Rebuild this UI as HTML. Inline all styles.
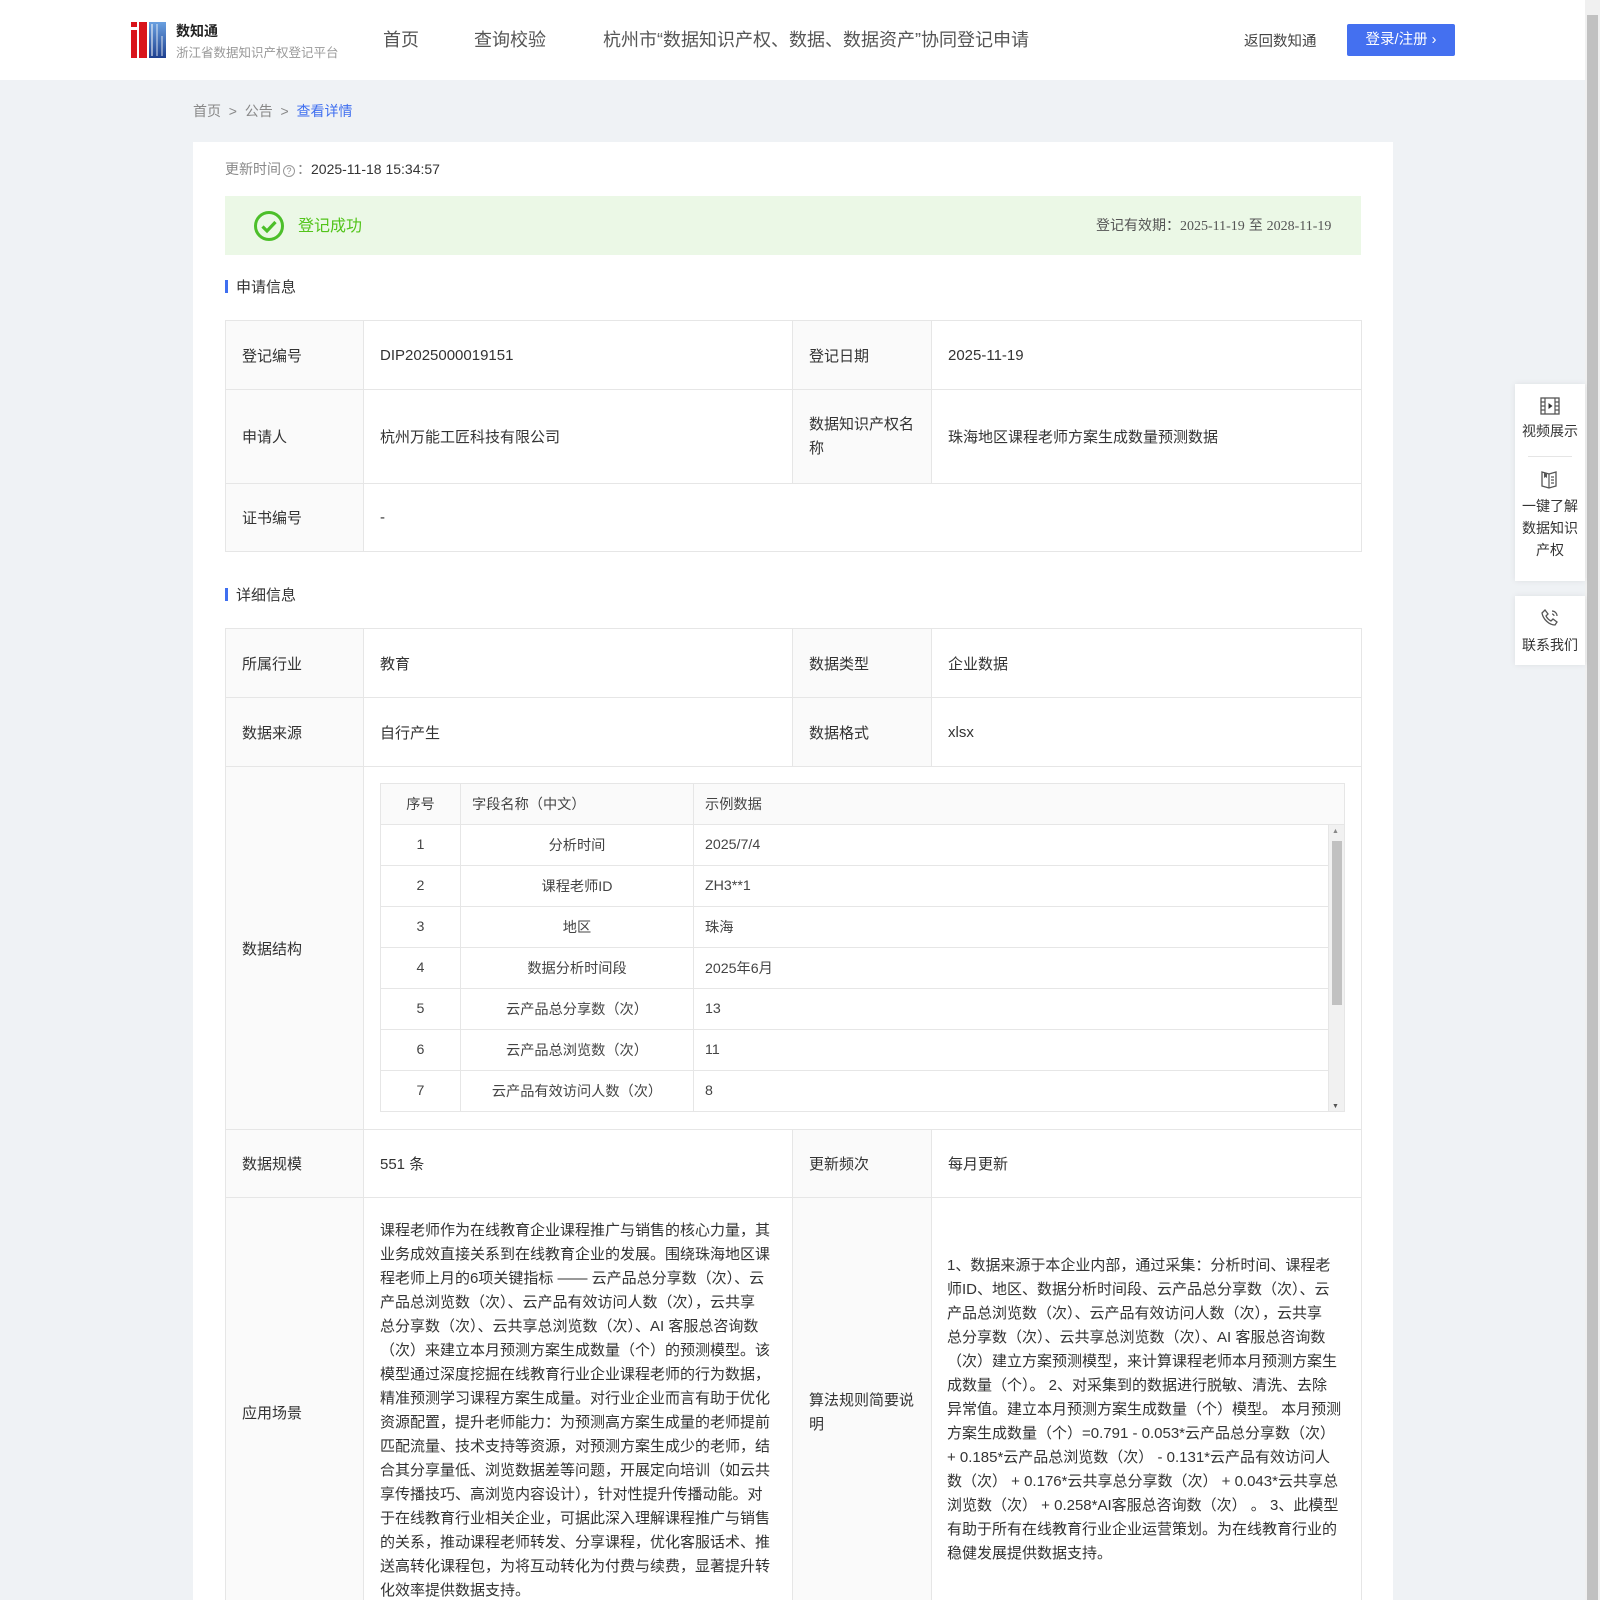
<!DOCTYPE html>
<html><head><meta charset="utf-8">
<style>
*{margin:0;padding:0;box-sizing:border-box}
html,body{width:1600px;height:1600px;overflow:hidden}
body{background:#eff2f5;font-family:"Liberation Sans","Noto Sans CJK SC",sans-serif;color:#333;font-size:14px;position:relative}
.a{position:absolute;white-space:nowrap}
.hdr{position:absolute;left:0;top:0;width:1585px;height:80px;background:#fff}
.nav{font-size:18px;color:#555;top:26px}
.card{position:absolute;left:193px;top:142px;width:1200px;height:1500px;background:#fff}
table.t{position:absolute;border-collapse:collapse;table-layout:fixed}
table.t td{border:1px solid #e6e6e6;padding:0 16px;font-size:15px;color:#333;vertical-align:middle}
table.t td.l{background:#fafafa}
.sec{font-size:15px;color:#333}
.sec:before{content:"";display:inline-block;width:3px;height:13px;background:#3f6ff0;margin-right:8px;vertical-align:-1px}
table.in{position:absolute;border-collapse:collapse;table-layout:fixed}
table.in td{border:1px solid #e6e6e6;height:41px;font-size:14.2px;color:#444;padding:0 11px}
.side{position:absolute;left:1515px;width:70px;background:#fff;box-shadow:0 0 6px rgba(0,0,0,.08);text-align:center;font-size:14px;color:#333;line-height:22px}
.ln div{height:24px;line-height:24px;white-space:nowrap;font-size:15px;color:#333}
</style></head><body>
<div class="hdr"></div>
<svg class="a" style="left:131px;top:22px" width="35" height="36" viewBox="0 0 35 36">
<defs><linearGradient id="g" x1="0" y1="0" x2="0" y2="1"><stop offset="0" stop-color="#6aa0e0"/><stop offset="1" stop-color="#1d3f8f"/></linearGradient></defs>
<rect x="0" y="0" width="6" height="5" fill="#d9141b"/><rect x="0" y="8" width="6" height="28" fill="#d9141b"/>
<rect x="8" y="0" width="8" height="36" fill="#d9141b"/>
<rect x="18" y="0" width="17" height="36" fill="url(#g)"/>
<rect x="20" y="2" width="2" height="32" fill="#fff" opacity=".5"/><rect x="25" y="2" width="2" height="32" fill="#fff" opacity=".4"/><rect x="30" y="14" width="2" height="20" fill="#fff" opacity=".4"/>
</svg>
<div class="a" style="left:176px;top:21px;font-size:14px;font-weight:bold;color:#222">数知通</div>
<div class="a" style="left:176px;top:42px;font-size:12.5px;color:#999">浙江省数据知识产权登记平台</div>
<div class="a nav" style="left:383px">首页</div>
<div class="a nav" style="left:474px">查询校验</div>
<div class="a nav" style="left:603px">杭州市“数据知识产权、数据、数据资产”协同登记申请</div>
<div class="a" style="left:1244px;top:30px;font-size:14.5px;color:#444">返回数知通</div>
<div class="a" style="left:1347px;top:24px;width:108px;height:32px;background:#4470f0;border-radius:2px;color:#fff;font-size:14.5px;line-height:32px;text-align:center">登录/注册 &#x203A;</div>
<div class="a" style="left:1585px;top:0;width:15px;height:1600px;background:#f0f0f0"></div>
<div class="a" style="left:1587px;top:15px;width:11px;height:1585px;background:#c1c1c1"></div>

<div class="a" style="left:193px;top:101px;font-size:14px;color:#888">首页 &nbsp;&gt;&nbsp; 公告 &nbsp;&gt;&nbsp; <span style="color:#3f6ff0">查看详情</span></div>

<div class="card"></div>
<div class="a" style="left:225px;top:159px;font-size:14px;color:#888">更新时间<span style="display:inline-block;width:12px;height:12px;border:1px solid #999;border-radius:50%;font-size:9px;line-height:10px;text-align:center;vertical-align:0;margin:0 2px">?</span>：<span style="color:#333">2025-11-18 15:34:57</span></div>
<div class="a" style="left:225px;top:196px;width:1136px;height:59px;background:#ebf8e6"></div>
<svg class="a" style="left:253px;top:210px" width="32" height="32" viewBox="0 0 32 32"><circle cx="16" cy="16" r="13.5" fill="none" stroke="#4cbf2a" stroke-width="3"/><path d="M9.5 16.5l4.5 4.5 8.5-9" fill="none" stroke="#4cbf2a" stroke-width="3.2"/></svg>
<div class="a" style="left:298px;top:212px;font-size:16px;color:#52c41a">登记成功</div>
<div class="a" style="left:1096px;top:215px;font-size:14px;color:#555">登记有效期：<span style="font-family:'Liberation Serif',serif">2025-11-19</span> 至 <span style="font-family:'Liberation Serif',serif">2028-11-19</span></div>

<div class="a sec" style="left:225px;top:276px">申请信息</div>
<table class="t" style="left:225px;top:320px;width:1136px">
<colgroup><col style="width:138px"><col style="width:429px"><col style="width:139px"><col style="width:430px"></colgroup>
<tr style="height:69px"><td class="l">登记编号</td><td>DIP2025000019151</td><td class="l">登记日期</td><td>2025-11-19</td></tr>
<tr style="height:94px"><td class="l">申请人</td><td>杭州万能工匠科技有限公司</td><td class="l" style="line-height:24px">数据知识产权名称</td><td>珠海地区课程老师方案生成数量预测数据</td></tr>
<tr style="height:68px"><td class="l">证书编号</td><td colspan="3">-</td></tr>
</table>

<div class="a sec" style="left:225px;top:584px">详细信息</div>
<table class="t" style="left:225px;top:628px;width:1136px">
<colgroup><col style="width:138px"><col style="width:429px"><col style="width:139px"><col style="width:430px"></colgroup>
<tr style="height:69px"><td class="l">所属行业</td><td>教育</td><td class="l">数据类型</td><td>企业数据</td></tr>
<tr style="height:69px"><td class="l">数据来源</td><td>自行产生</td><td class="l">数据格式</td><td>xlsx</td></tr>
<tr style="height:363px"><td class="l">数据结构</td><td colspan="3"></td></tr>
<tr style="height:68px"><td class="l">数据规模</td><td>551 条</td><td class="l">更新频次</td><td>每月更新</td></tr>
<tr style="height:430px"><td class="l">应用场景</td><td></td><td class="l" style="line-height:24px">算法规则简要说明</td><td></td></tr>
</table>

<table class="in" style="left:380px;top:783px;width:964px">
<colgroup><col style="width:80px"><col style="width:233px"><col style="width:635px"><col style="width:16px"></colgroup>
<tr style="background:#fafafa"><td style="text-align:center">序号</td><td>字段名称（中文）</td><td colspan="2">示例数据</td></tr>
<tr><td style="text-align:center">1</td><td style="text-align:center">分析时间</td><td>2025/7/4</td><td rowspan="7" style="padding:0;background:#f1f1f1;vertical-align:top;position:relative"><div style="position:absolute;left:3px;top:3px;font-size:7px;color:#888">▲</div><div style="position:absolute;left:3px;top:16px;width:10px;height:164px;background:#c1c1c1"></div><div style="position:absolute;left:3px;bottom:1px;font-size:7px;color:#555">▼</div></td></tr>
<tr><td style="text-align:center">2</td><td style="text-align:center">课程老师ID</td><td>ZH3**1</td></tr>
<tr><td style="text-align:center">3</td><td style="text-align:center">地区</td><td>珠海</td></tr>
<tr><td style="text-align:center">4</td><td style="text-align:center">数据分析时间段</td><td>2025年6月</td></tr>
<tr><td style="text-align:center">5</td><td style="text-align:center">云产品总分享数（次）</td><td>13</td></tr>
<tr><td style="text-align:center">6</td><td style="text-align:center">云产品总浏览数（次）</td><td>11</td></tr>
<tr><td style="text-align:center">7</td><td style="text-align:center">云产品有效访问人数（次）</td><td>8</td></tr>
</table>

<div class="a ln" style="left:380px;top:1219px">
<div>课程老师作为在线教育企业课程推广与销售的核心力量，其</div>
<div>业务成效直接关系到在线教育企业的发展。围绕珠海地区课</div>
<div>程老师上月的6项关键指标 —— 云产品总分享数（次）、云</div>
<div>产品总浏览数（次）、云产品有效访问人数（次），云共享</div>
<div>总分享数（次）、云共享总浏览数（次）、AI 客服总咨询数</div>
<div>（次）来建立本月预测方案生成数量（个）的预测模型。该</div>
<div>模型通过深度挖掘在线教育行业企业课程老师的行为数据，</div>
<div>精准预测学习课程方案生成量。对行业企业而言有助于优化</div>
<div>资源配置，提升老师能力：为预测高方案生成量的老师提前</div>
<div>匹配流量、技术支持等资源，对预测方案生成少的老师，结</div>
<div>合其分享量低、浏览数据差等问题，开展定向培训（如云共</div>
<div>享传播技巧、高浏览内容设计），针对性提升传播动能。对</div>
<div>于在线教育行业相关企业，可据此深入理解课程推广与销售</div>
<div>的关系，推动课程老师转发、分享课程，优化客服话术、推</div>
<div>送高转化课程包，为将互动转化为付费与续费，显著提升转</div>
<div>化效率提供数据支持。</div>
</div>
<div class="a ln" style="left:947px;top:1254px">
<div>1、数据来源于本企业内部，通过采集：分析时间、课程老</div>
<div>师ID、地区、数据分析时间段、云产品总分享数（次）、云</div>
<div>产品总浏览数（次）、云产品有效访问人数（次），云共享</div>
<div>总分享数（次）、云共享总浏览数（次）、AI 客服总咨询数</div>
<div>（次）建立方案预测模型，来计算课程老师本月预测方案生</div>
<div>成数量（个）。 2、对采集到的数据进行脱敏、清洗、去除</div>
<div>异常值。建立本月预测方案生成数量（个）模型。 本月预测</div>
<div>方案生成数量（个）=0.791 - 0.053*云产品总分享数（次）</div>
<div>+ 0.185*云产品总浏览数（次） - 0.131*云产品有效访问人</div>
<div>数（次） + 0.176*云共享总分享数（次） + 0.043*云共享总</div>
<div>浏览数（次） + 0.258*AI客服总咨询数（次） 。 3、此模型</div>
<div>有助于所有在线教育行业企业运营策划。为在线教育行业的</div>
<div>稳健发展提供数据支持。</div>
</div>

<div class="side" style="top:384px;height:197px">
<svg style="margin-top:13px" width="20" height="18" viewBox="0 0 20 18"><rect x="1" y="1" width="18" height="16" fill="none" stroke="#555" stroke-width="1.3"/><path d="M5 1v16M15 1v16M1 5h4M1 9h4M1 13h4M15 5h4M15 9h4M15 13h4" stroke="#555" stroke-width="1.2"/><path d="M8.5 6l4 3-4 3z" fill="#333"/></svg>
<div style="margin-top:-1px">视频展示</div>
<div style="width:44px;height:1px;background:#e5e5e5;margin:14px auto 12px"></div>
<svg width="20" height="20" viewBox="0 0 20 20"><path d="M2 3l7 2 7-2v14l-7 2-7-2z" fill="none" stroke="#555" stroke-width="1.3"/><path d="M9 5v14M11 8h3M11 11h3M11 14h3" stroke="#555" stroke-width="1.2"/><path d="M4 4l3 1v4l-1.5-1L4 9z" fill="#555"/></svg>
<div>一键了解<br>数据知识<br>产权</div>
</div>
<div class="side" style="top:596px;height:69px">
<svg style="margin-top:12px" width="20" height="20" viewBox="0 0 20 20"><path d="M5 2l3 4-2 2c1 2 3 4 5 5l2-2 4 3-2 3C9 17 3 11 2 5z" fill="none" stroke="#555" stroke-width="1.3"/><path d="M12 3a5 5 0 0 1 5 5M12 6a2 2 0 0 1 2 2" fill="none" stroke="#555" stroke-width="1.2"/></svg>
<div>联系我们</div>
</div>
</body></html>
